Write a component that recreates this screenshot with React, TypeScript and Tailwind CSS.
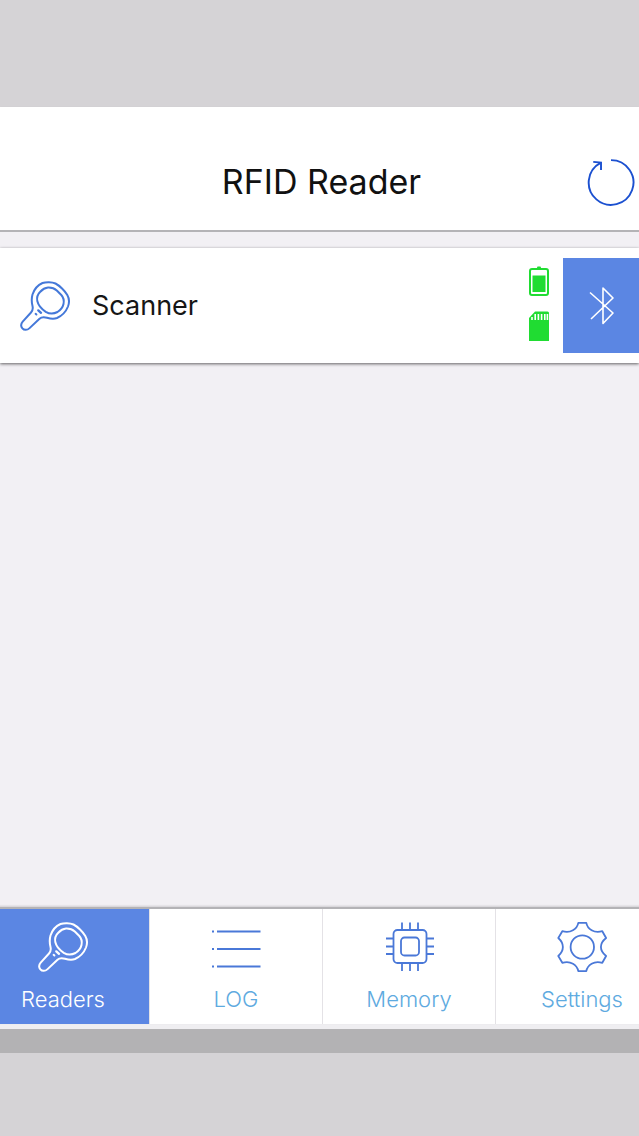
import { useState, type ComponentType } from "react";
import clsx from "clsx";

interface IconProps {
  className?: string;
}

interface Reader {
  id: string;
  name: string;
}

interface Tab {
  id: string;
  label: string;
  icon: ComponentType<IconProps>;
}

function ScannerIcon({ className }: IconProps) {
  return (
    <svg viewBox="0 0 50 50" fill="none" stroke="currentColor" strokeWidth="2" strokeLinecap="round" strokeLinejoin="round" className={className} aria-hidden="true">
      <path d="M12.5 25 C11.5 21 11.5 17 12.5 13.5 C14 9 18 4 22.5 2 C26 .8 32 .8 35.5 2.5 C39.5 4.5 45 10 47.3 14 C49.3 17.5 49.3 22 48 25.5 C46 30.5 41.5 35 37 37 C33.5 38.3 30 37.6 27 36.7 C23.5 35.8 21.5 35.8 19.5 37.7 L9.3 47.4 C7 49.5 4 49.2 2.4 47.3 C.7 45.2 .8 42.8 2.7 40.6 L11 31.5 C12.9 29.5 13.1 27.5 12.5 25 Z" />
      <path d="M17.3 20 C16.5 16 17.5 13.5 20 11 C22.5 8.3 24.5 6.8 28 6.6 C32 6.4 34 7 36.8 9.5 L41.3 14 C43.6 16.5 44.2 19.5 43.5 23 C42.7 26.8 40.5 29 37.5 31 C33.5 33 29 32.7 25.8 30.8 C21.5 28 18.3 24.5 17.3 20 Z" />
      <path d="M18.3 29.4 L21 31.8" strokeWidth="2.4" />
      <path d="M15.6 32.8 L16.4 33.5" strokeWidth="2" />
    </svg>
  );
}

function ListIcon({ className }: IconProps) {
  return (
    <svg viewBox="0 0 50 50" fill="none" stroke="currentColor" strokeWidth="2" className={className} aria-hidden="true">
      <path d="M1 9.5h2M6 9.5h43.5M1 27h2M6 27h43.5M1 44.5h2M6 44.5h43.5" />
    </svg>
  );
}

function ChipIcon({ className }: IconProps) {
  return (
    <svg viewBox="0 0 50 50" fill="none" stroke="currentColor" strokeWidth="1.8" className={className} aria-hidden="true">
      <rect x="9.5" y="8" width="33" height="33" rx="4" />
      <rect x="17" y="15.5" width="18" height="18" rx="3.5" />
      <path d="M18 .5v7.5M26 .5v7.5M34 .5v7.5M18 41v8M26 41v8M34 41v8M2 16.5h7.5M2 24.5h7.5M2 32h7.5M42.5 16.5h7.5M42.5 24.5h7.5M42.5 32h7.5" />
    </svg>
  );
}

function GearIcon({ className }: IconProps) {
  return (
    <svg viewBox="0 0 50 50" fill="none" stroke="currentColor" strokeWidth="1.8" strokeLinejoin="round" className={className} aria-hidden="true">
      <path d="M21.3 .9 H29.3 C30.5 7 37 11.8 45.3 9.2 L49.1 16 C42.2 21.5 42.2 28.5 49.1 34 L45.3 40.8 C37 38.2 30.5 43 29.3 49.1 H21.3 C20.1 43 13.6 38.2 5.3 40.8 L1.3 34 C7.4 28.5 7.4 21.5 1.3 16 L5.3 9.2 C13.6 11.8 20.1 7 21.3 .9 Z" />
      <circle cx="25.3" cy="25" r="11.7" />
    </svg>
  );
}

function RefreshIcon({ className }: IconProps) {
  return (
    <svg viewBox="0 0 50 50" fill="none" stroke="currentColor" strokeWidth="2" className={className} aria-hidden="true">
      <path d="M25 2.2 A23.3 23.3 0 1 1 14 5" />
      <path d="M6.5 4 L14.6 4.8 V12.5" />
    </svg>
  );
}

function BluetoothIcon({ className }: IconProps) {
  return (
    <svg viewBox="0 0 26 40" fill="none" stroke="currentColor" strokeWidth="1.6" strokeLinejoin="round" className={className} aria-hidden="true">
      <path d="M2 6.5 L25 27 L15 37.5 V2 L25 12 L3 33" />
    </svg>
  );
}

function BatteryIcon({ className }: IconProps) {
  return (
    <svg viewBox="0 0 20 30" className={className} aria-hidden="true">
      <path d="M8 2.5 V1.5 Q8 .5 9 .5 H11 Q12 .5 12 1.5 V2.5" fill="currentColor" />
      <rect x="1" y="3" width="18" height="26" rx="2" fill="none" stroke="currentColor" strokeWidth="2" />
      <rect x="3.5" y="9.5" width="13" height="16.5" fill="currentColor" />
    </svg>
  );
}

function SdCardIcon({ className }: IconProps) {
  return (
    <svg viewBox="0 0 20 30" className={className} aria-hidden="true">
      <path d="M6 .5 H18.5 Q20 .5 20 2 V30 H0 V7 Z" fill="currentColor" />
      <path d="M3 6v3M6.2 3v6M9.4 3v6M12.6 3v6M15.8 3v6M18.4 3v6" stroke="white" strokeWidth="1.6" />
    </svg>
  );
}

const readers: Reader[] = [{ id: "scanner", name: "Scanner" }];

const tabs: Tab[] = [
  { id: "readers", label: "Readers", icon: ScannerIcon },
  { id: "log", label: "LOG", icon: ListIcon },
  { id: "memory", label: "Memory", icon: ChipIcon },
  { id: "settings", label: "Settings", icon: GearIcon },
];

function Header() {
  return (
    <header className="grid h-[125px] grid-cols-[52px_1fr_52px] items-end border-b-2 border-[#b4b3b6] bg-white pb-6 shadow-[0_1px_2px_rgba(0,0,0,0.15)]">
      <h1 className="col-start-2 pl-1 text-center text-[34px] leading-[48px] text-[#111]">RFID Reader</h1>
      <button type="button" aria-label="Refresh" className="text-[#1b50d0]">
        <RefreshIcon className="size-12" />
      </button>
    </header>
  );
}

function ReaderRow({ reader }: { reader: Reader }) {
  return (
    <li className="flex h-[115px] items-center bg-white pl-5 shadow-[0_1px_3px_rgba(0,0,0,0.6)]">
      <ScannerIcon className="size-[50px] text-[#4478d9]" />
      <span className="ml-[22px] flex-1 pt-px text-[27px] leading-9 text-[#161616]">{reader.name}</span>
      <div className="mr-3.5 flex flex-col gap-[15px] pb-1 text-[#20dc32]">
        <BatteryIcon className="h-[30px] w-5" />
        <SdCardIcon className="h-[30px] w-5" />
      </div>
      <button type="button" aria-label={`Connect ${reader.name}`} className="flex h-[95px] w-[76px] items-center justify-center bg-[#5b86e3] text-white">
        <BluetoothIcon className="h-10 w-[26px]" />
      </button>
    </li>
  );
}

export default function App() {
  const [activeTab, setActiveTab] = useState("readers");

  return (
    <div className="flex min-h-screen flex-col overflow-hidden bg-[#d5d3d6] font-['Inter',sans-serif]">
      <div className="h-[107px]" />
      <Header />
      <main className="flex-1 bg-[#f2f0f4] pt-4">
        <ul>
          {readers.map((reader) => (
            <ReaderRow key={reader.id} reader={reader} />
          ))}
        </ul>
      </main>

      {/* The tab strip runs past both screen edges */}
      <nav className="relative -mr-[30px] -ml-[23px] grid grid-cols-4 border-t-2 border-[#b4b3b6] bg-white shadow-[0_-1px_2px_rgba(0,0,0,0.15)]">
        {tabs.map(({ id, label, icon: Icon }) => {
          const active = id === activeTab;
          return (
            <button
              key={id}
              type="button"
              aria-current={active ? "page" : undefined}
              onClick={() => setActiveTab(id)}
              className={clsx(
                "flex h-[115px] flex-col items-center border-r border-[#e4e2e6] pt-[13px]",
                active ? "bg-[#5b86e3] text-white" : "text-[#4a78d8]"
              )}
            >
              <Icon className="size-[50px]" />
              <span className={clsx("mt-[13px] text-[22px] leading-7 font-light", active ? "text-white" : "text-[#5eaae0]")}>{label}</span>
            </button>
          );
        })}
      </nav>
      <div className="h-[5px] bg-[#efeef1]" />
      <div className="h-6 bg-[#b3b2b4]" />
      <div className="h-[83px]" />
    </div>
  );
}
